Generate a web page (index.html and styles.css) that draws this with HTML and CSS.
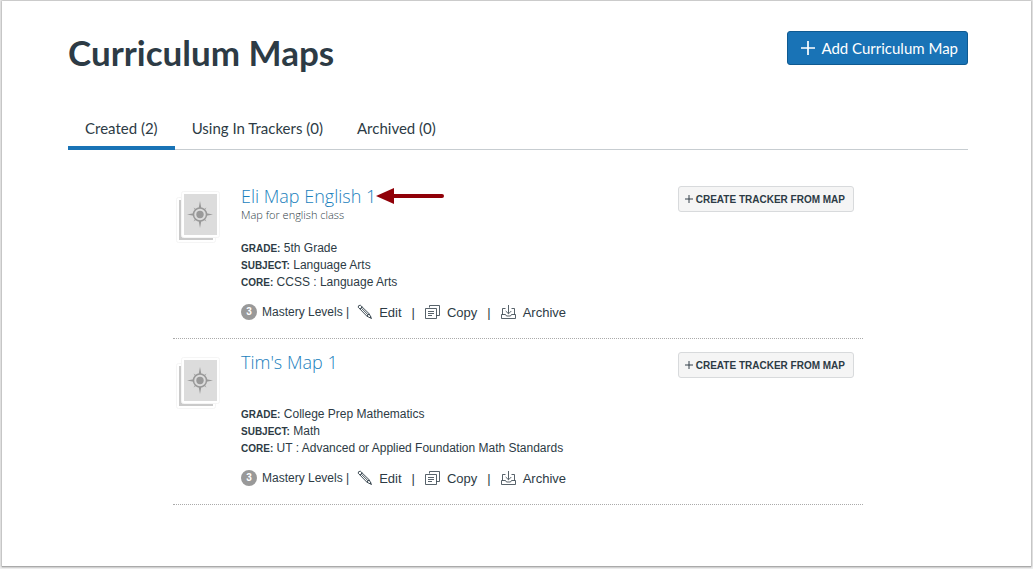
FILE: index.html
```html
<!DOCTYPE html>
<html lang="en">
<head>
<meta charset="utf-8">
<meta name="viewport" content="width=device-width, initial-scale=1">
<title>Curriculum Maps</title>
<link rel="stylesheet" href="styles.css">
</head>
<body>
<svg class="sprite" aria-hidden="true">
  <symbol id="plus" viewBox="0 0 14 14"><path d="M7 0v14M0 7h14" fill="none" stroke="currentColor" stroke-width="1.700"/></symbol>
  <symbol id="map" viewBox="0 0 48 56">
    <rect x="2.500" y="8.500" width="39" height="45" rx="2" fill="#fff" stroke="#f5f5f5"/>
    <path d="M5 11h34v40H5z" fill="#cacaca"/>
    <rect x="7.500" y="2.500" width="38" height="46" rx="2" fill="#fff" stroke="#f5f5f5"/>
    <path d="M10 5h33v41H10z" fill="#dcdcdc"/>
    <path d="M26 12l1.500 8h-3zM26 39l1.500-8h-3zM13 25.500l8-1.500v3zM39 25.500l-8-1.500v3z" fill="#999"/>
    <path d="M19.500 18.500l3 2-1 1zM32.500 18.500l-3 2 1 1zM19.500 32.500l3-2-1-1zM32.500 32.500l-3-2 1-1z" fill="#999"/>
    <circle cx="26" cy="25.500" r="6.500" fill="#dcdcdc" stroke="#999" stroke-width="1.500"/>
    <circle cx="26" cy="25.500" r="3.700" fill="#999"/>
  </symbol>
  <symbol id="pencil" viewBox="0 0 16 16">
    <path d="M1.200 3.200Q1 1.200 3.300 1.200l8.900 8.600 2.300 4.700-4.600-2.300zM2.900 5l2.400-2.200M9.900 12.200l2.300-2.400M4.200 4l6.800 6.800M12.800 14l1.200-1.200" fill="none" stroke="currentColor" stroke-width=".9" stroke-linejoin="round"/>
  </symbol>
  <symbol id="copy" viewBox="0 0 16 16">
    <path d="M4.500 3.500v-2h10v10h-3M.5 4.500h11v10H.5zM3 7.500h6M3 9.500h6M3 11.500h4" fill="none" stroke="currentColor" stroke-width=".8"/>
  </symbol>
  <symbol id="archive" viewBox="0 0 16 16">
    <path d="M7.500 1v8.500M4.700 7l2.800 2.800L10.300 7M4.500 4.500h-3v6M10.500 4.500h3v6M.5 10.500h4l1 1.500h4l1-1.500h4v4H.5z" fill="none" stroke="currentColor" stroke-width=".8"/>
  </symbol>
</svg>
<main class="page">
  <header class="header">
    <h1 class="title">Curriculum Maps</h1>
    <button class="add" type="button"><svg class="add-icon" aria-hidden="true"><use href="#plus"/></svg>Add Curriculum Map</button>
  </header>
  <nav class="tabs" aria-label="Map lists">
    <a class="tab tab-active" href="#created" aria-current="page">Created (2)</a>
    <a class="tab" href="#trackers">Using In Trackers (0)</a>
    <a class="tab" href="#archived">Archived (0)</a>
  </nav>
  <section class="list" id="created">
    <article class="item">
      <svg class="thumb" aria-hidden="true"><use href="#map"/></svg>
      <div class="info">
        <div class="heading">
          <h2 class="name"><a class="name-link" href="#eli">Eli Map English 1</a></h2>
          <svg class="arrow" viewBox="0 0 68 18" aria-hidden="true"><path d="M16 9h50" stroke="#900008" stroke-width="4" stroke-linecap="round"/><path d="M0 9l18-8v16z" fill="#900008"/></svg>
        </div>
        <p class="summary">Map for english class</p>
        <dl class="facts">
          <div class="fact"><dt class="term">GRADE:</dt> <dd class="value">5th Grade</dd></div>
          <div class="fact"><dt class="term">SUBJECT:</dt> <dd class="value">Language Arts</dd></div>
          <div class="fact"><dt class="term">CORE:</dt> <dd class="value">CCSS : Language Arts</dd></div>
        </dl>
        <div class="actions">
          <span class="levels"><span class="count">3</span>Mastery Levels |</span>
          <button class="action" type="button"><svg class="icon" aria-hidden="true"><use href="#pencil"/></svg>Edit</button>
          <span class="bar">|</span>
          <button class="action" type="button"><svg class="icon" aria-hidden="true"><use href="#copy"/></svg>Copy</button>
          <span class="bar">|</span>
          <button class="action" type="button"><svg class="icon" aria-hidden="true"><use href="#archive"/></svg>Archive</button>
        </div>
      </div>
      <button class="create" type="button"><svg class="create-icon" aria-hidden="true"><use href="#plus"/></svg>CREATE TRACKER FROM MAP</button>
    </article>
    <article class="item">
      <svg class="thumb" aria-hidden="true"><use href="#map"/></svg>
      <div class="info">
        <div class="heading">
          <h2 class="name"><a class="name-link" href="#tim">Tim's Map 1</a></h2>
        </div>
        <p class="summary"></p>
        <dl class="facts">
          <div class="fact"><dt class="term">GRADE:</dt> <dd class="value">College Prep Mathematics</dd></div>
          <div class="fact"><dt class="term">SUBJECT:</dt> <dd class="value">Math</dd></div>
          <div class="fact"><dt class="term">CORE:</dt> <dd class="value">UT : Advanced or Applied Foundation Math Standards</dd></div>
        </dl>
        <div class="actions">
          <span class="levels"><span class="count">3</span>Mastery Levels |</span>
          <button class="action" type="button"><svg class="icon" aria-hidden="true"><use href="#pencil"/></svg>Edit</button>
          <span class="bar">|</span>
          <button class="action" type="button"><svg class="icon" aria-hidden="true"><use href="#copy"/></svg>Copy</button>
          <span class="bar">|</span>
          <button class="action" type="button"><svg class="icon" aria-hidden="true"><use href="#archive"/></svg>Archive</button>
        </div>
      </div>
      <button class="create" type="button"><svg class="create-icon" aria-hidden="true"><use href="#plus"/></svg>CREATE TRACKER FROM MAP</button>
    </article>
  </section>
</main>
</body>
</html>
```
FILE: styles.css
```css
* { box-sizing: border-box; }
body {
  margin: 0;
  padding: 1px 2px 3px;
  min-height: 100vh;
  display: flex;
  background: #f0f0f0;
  color: #2d3b45;
  font-family: "Liberation Sans", Arial, sans-serif;
}
button { font: inherit; color: inherit; cursor: pointer; }
.sprite { position: absolute; width: 0; height: 0; }
.page {
  flex: 1;
  min-width: 0;
  padding: 24px 63px 24px 66px;
  background: #fff;
  box-shadow: 0 0 2px 1px #bbb, 0 1px 1px #888;
}
.header { display: flex; justify-content: space-between; align-items: flex-start; }
.title { margin: 0; font: 700 35px/54px Lato, sans-serif; }
.add {
  display: flex;
  align-items: center;
  gap: 6px;
  height: 34px;
  margin-top: 6px;
  padding: 0 9px 0 13px;
  border: 1px solid #0f5a91;
  border-radius: 3px;
  background: #1973b6;
  color: #fff;
  font: 400 15px/20px Lato, sans-serif;
}
.add-icon { width: 14px; height: 14px; }
.tabs { display: flex; margin-top: 28px; border-bottom: 1px solid #c7cdd1; }
.tab {
  height: 43px;
  margin-bottom: -1px;
  padding: 0 17px;
  border-bottom: 4px solid transparent;
  color: inherit;
  font: 400 15px/42px Lato, sans-serif;
  text-decoration: none;
}
.tab-active { border-bottom-color: #1973b6; }
.list { max-width: 690px; margin: 23px auto 0; }
.item {
  display: flex;
  align-items: flex-start;
  padding: 12px 9px 17px 1px;
  border-bottom: 1px dotted #aaa;
}
.thumb { flex: none; width: 48px; height: 56px; margin-top: 4px; }
.info { flex: 1; min-width: 0; margin-left: 19px; }
.heading { display: flex; align-items: center; height: 22px; }
.name { margin: 0; font: 300 18px/22px "Open Sans", sans-serif; }
.name-link { color: #1b7fbd; text-decoration: none; }
.arrow { width: 68px; height: 18px; }
.summary { min-height: 16px; margin: 0; font: 300 11px/16px "Open Sans", sans-serif; }
.facts { margin: 17px 0 0; }
.fact { font-size: 12px; line-height: 17px; }
.term { display: inline; font-size: 10px; font-weight: 700; }
.value { display: inline; margin: 0; }
.actions { display: flex; align-items: center; height: 18px; margin-top: 12px; font-size: 13px; }
.levels { display: flex; align-items: center; gap: 5px; margin-right: 8px; font-size: 12px; }
.count {
  width: 16px;
  height: 16px;
  border-radius: 50%;
  background: #999;
  color: #fff;
  font-size: 10px;
  font-weight: 700;
  line-height: 16px;
  text-align: center;
}
.action { display: flex; align-items: center; gap: 6px; padding: 0; border: 0; background: none; }
.icon { width: 16px; height: 16px; }
.bar { margin: 0 10px; }
.create {
  display: flex;
  align-items: center;
  gap: 3px;
  height: 26px;
  margin-top: 1px;
  padding: 0 8px 0 6px;
  border: 1px solid #d8dadc;
  border-radius: 3px;
  background: #f5f5f5;
  font-size: 10px;
  font-weight: 700;
  white-space: nowrap;
}
.create-icon { width: 8px; height: 8px; }
```
